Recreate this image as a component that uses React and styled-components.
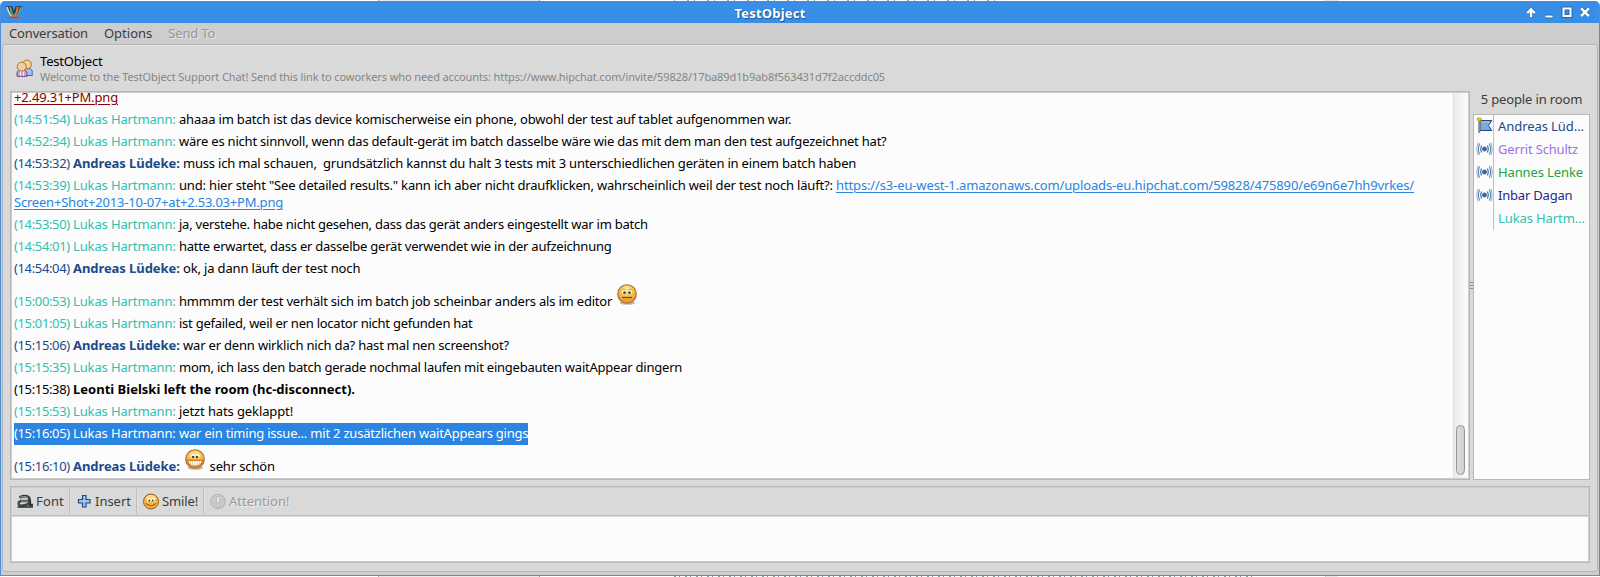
import React from "react";
import styled, { createGlobalStyle } from "styled-components";

const Global = createGlobalStyle`
  html, body { margin: 0; background: #fff; overflow: hidden; }
  * { box-sizing: border-box; }
`;

const Desktop = styled.div`
  width: 1600px;
  height: 577px;
  display: flex;
  flex-direction: column;
  font: 13px/17px "Noto Sans", "Open Sans", sans-serif;
  color: #3c3c3c;
  overflow: hidden;
`;

const DesktopEdge = styled.div`
  height: 1px;
  flex: none;
  background: ${(p) =>
    p.$busy
      ? "linear-gradient(90deg,#fff 378px,#aaa 378px,#aaa 379px,#e6eaea 379px,#e6eaea 539px,#999 539px,#999 540px,transparent 540px,transparent 1325px,#aaa 1325px,#e8e8e8 1326px,#e8e8e8 1338px,#fff 1338px), linear-gradient(90deg,#fff 672px,transparent 672px,transparent 1257px,#fff 1257px), repeating-linear-gradient(90deg,#fff 0 3px,#7fa8a0 3px 5px,#fff 5px 8px,#7a96b8 8px 9px,#fff 9px 11px)"
      : "linear-gradient(90deg,#fff 378px,#aaa 378px,#aaa 379px,#e6eaea 379px,#e6eaea 539px,#999 539px,#999 540px,transparent 540px,transparent 1325px,#aaa 1325px,#e8e8e8 1326px,#e8e8e8 1338px,#fff 1338px), linear-gradient(90deg,#fff 672px,transparent 672px,transparent 1000px,#fff 1000px), repeating-linear-gradient(90deg,#fff 0 7px,#8fb0a0 7px 9px,#fff 9px 14px,#a0b0c0 14px 15px,#fff 15px 20px)"};
`;

const Window = styled.div`
  height: 575px;
  display: flex;
  flex-direction: column;
  background: #cdcdcd;
  border: 1px solid #4a90d9;
  border-top: 0;
  border-radius: 5px 5px 0 0;
  overflow: hidden;
`;

const TitleBar = styled.header`
  height: 22px;
  margin: 0 -1px;
  flex: none;
  display: grid;
  grid-template-columns: 80px 1fr 140px;
  align-items: center;
  background: #398ee7;
`;

const TitleIcon = styled.svg`
  width: 18px;
  height: 16px;
  margin-left: 5px;
`;

const Title = styled.h1`
  margin: 0;
  text-align: center;
  font-size: 13px;
  line-height: 17px;
  letter-spacing: 0.2px;
  color: #fff;
  text-shadow: 1px 1px 1px #1f5c9f, 0 0 1px #1f5c9f;
  padding: 3px 0 0 0;
`;

const WindowButtons = styled.svg`
  width: 72px;
  height: 20px;
  justify-self: end;
  margin-right: 5px;
`;

const MenuBar = styled.nav`
  height: 21px;
  flex: none;
  display: flex;
  gap: 16px;
  padding: 2px 0 0 8px;
`;

const MenuItem = styled.span`
  letter-spacing: ${(p) => p.$track || 0}px;
  color: ${(p) => (p.$disabled ? "#969696" : "#3c3c3c")};
  text-shadow: ${(p) => (p.$disabled ? "1px 1px 0 #e6e6e6" : "none")};
`;

const Content = styled.main`
  height: 528px;
  margin: 0 1px;
  display: flex;
  flex-direction: column;
  background: #d9d9d9;
  border: 1px solid #b5b5b5;
  border-radius: 3px;
  box-shadow: inset 0 1px 0 #e4e4e4;
  padding: 0 7px;
`;

const RoomHeader = styled.div`
  height: 46px;
  flex: none;
  display: flex;
  padding: 8px 0 0 6px;
  gap: 7px;
`;

const RoomIcon = styled.svg`
  width: 17px;
  height: 18px;
  margin-top: 6px;
`;

const RoomText = styled.div`
  display: flex;
  flex-direction: column;
`;

const RoomName = styled.div`
  color: #000;
  line-height: 16px;
  letter-spacing: -0.18px;
`;

const RoomTopic = styled.div`
  font-size: 11px;
  line-height: 15px;
  letter-spacing: -0.1px;
  color: #868686;
`;

const Panes = styled.div`
  height: 389px;
  flex: none;
  display: flex;
`;

const LogFrame = styled.section`
  width: 1460px;
  display: flex;
  border: 1px solid #b8b8b8;
  box-shadow: inset 0 0 0 1px #cccccc;
  padding: 1px;
  background: #fcfcfc;
`;

const Log = styled.div`
  flex: 1;
  min-width: 0;
  height: 385px;
  overflow: hidden;
  display: flex;
  flex-direction: column;
  align-items: flex-start;
  justify-content: flex-end;
  padding: 0 0 0 2px;
`;

const Row = styled.div`
  flex: none;
  padding: ${(p) => (p.$tall ? "13px" : "2px")} 0 3px 0;
  white-space: pre;
  color: ${(p) => (p.$selected ? "#fff" : "#000")};
  background: ${(p) => (p.$selected ? "#2b84e0" : "transparent")};
`;

const Stamp = styled.span`
  display: inline-block;
  width: 59px;
  letter-spacing: -0.36px;
  color: ${(p) => p.$color};
`;

const Sender = styled.span`
  display: inline-block;
  width: ${(p) => (p.$own ? "110px" : "106px")};
  font-weight: ${(p) => (p.$own ? 700 : 400)};
  letter-spacing: ${(p) => (p.$own ? -0.07 : -0.13)}px;
  color: ${(p) => p.$color};
`;

const Words = styled.span`
  letter-spacing: ${(p) => p.$track}px;
  font-weight: ${(p) => (p.$bold ? 700 : 400)};
`;

const Link = styled.a`
  letter-spacing: ${(p) => p.$track}px;
  color: ${(p) => (p.$visited ? "#8b0000" : "#2b84e0")};
  text-decoration: underline;
  text-decoration-thickness: 1px;
  text-underline-offset: 2px;
`;

const EmojiSvg = styled.svg`
  width: 20px;
  height: 21px;
  vertical-align: 1px;
  margin: -14px 1px 0 ${(p) => p.$left}px;
`;

const ScrollTrack = styled.div`
  width: 15px;
  border-left: 1px solid #dedede;
  background: linear-gradient(90deg, #ebebeb, #fbfbfb 90%);
  display: flex;
  flex-direction: column;
  justify-content: flex-end;
  padding: 0 3px 3px 2px;
`;

const ScrollThumb = styled.div`
  height: 50px;
  width: 9px;
  border: 1px solid #969696;
  border-radius: 4.5px;
  background: linear-gradient(90deg, #dedede, #cfcfcf);
`;

const Sash = styled.div`
  width: 3px;
  display: flex;
  flex-direction: column;
  align-items: stretch;
  gap: 2px;
  padding-top: 191px;
`;

const Grip = styled.i`
  height: 1px;
  background: #8c8c8c;
`;

const People = styled.aside`
  width: 117px;
  display: flex;
  flex-direction: column;
`;

const PeopleCount = styled.div`
  height: 23px;
  text-align: center;
  letter-spacing: -0.14px;
`;

const PeopleList = styled.div`
  height: 366px;
  border: 1px solid #b8b8b8;
  background: #fcfcfc;
`;

const Person = styled.div`
  height: 23px;
  display: flex;
`;

const PersonIcon = styled.div`
  width: 20px;
  flex: none;
  border-right: 1px solid #c0c0c0;
  padding: 2px 0 0 1px;
  svg { display: block; width: 18px; height: 17px; }
`;

const PersonName = styled.span`
  padding: 3px 0 0 4px;
  white-space: nowrap;
  letter-spacing: ${(p) => p.$track}px;
  color: ${(p) => p.$color};
`;

const Composer = styled.section`
  margin-top: 6px;
  height: 77px;
  width: 1580px;
  border: 1px solid #b8b8b8;
  box-shadow: inset 0 0 0 1px #cccccc;
  padding: 1px;
  display: flex;
  flex-direction: column;
`;

const Toolbar = styled.div`
  height: 28px;
  display: flex;
  border-bottom: 1px solid #bdbdbd;
  box-shadow: 0 1px 0 #dcdcdc;
`;

const Tool = styled.button`
  width: ${(p) => p.$width}px;
  height: 26px;
  display: flex;
  align-items: flex-start;
  gap: ${(p) => p.$gap}px;
  border: 0;
  border-right: ${(p) => (p.$disabled ? "0" : "1px solid #c0c0c0")};
  box-shadow: ${(p) => (p.$disabled ? "none" : "1px 0 0 #e0e0e0")};
  background: none;
  font: inherit;
  padding: 5px 0 0 ${(p) => p.$inset}px;
  letter-spacing: ${(p) => p.$track}px;
  color: ${(p) => (p.$disabled ? "#9a9a9a" : "#3c3c3c")};
  text-shadow: ${(p) => (p.$disabled ? "1px 1px 0 #eeeeee" : "none")};
  svg { flex: none; width: 16px; height: 17px; }
`;

const Draft = styled.div`
  flex: 1;
  background: #fcfcfc;
  margin-top: 1px;
`;

const TEAL = "#2fc1af";
const NAVY = "#204a87";

function Emoji({ grin, left }) {
  return (
    <EmojiSvg viewBox="0 0 20 21" $left={left}>
      <defs>
        <radialGradient id="face" cx=".5" cy=".25" r=".8">
          <stop offset="0" stopColor="#fff08a" />
          <stop offset=".4" stopColor="#fac552" />
          <stop offset="1" stopColor="#dd8a22" />
        </radialGradient>
      </defs>
      <ellipse cx="10.5" cy="18.8" rx="8" ry="2" fill="#000" opacity=".25" />
      <circle cx="10" cy="10" r="9.3" fill="url(#face)" stroke="#a8683a" strokeWidth="1.1" />
      {grin ? (
        <g>
          <ellipse cx="7.4" cy="7" rx="2.1" ry="2.1" fill="#fff" />
          <ellipse cx="12.6" cy="7" rx="2.1" ry="2.1" fill="#fff" />
          <circle cx="8" cy="8" r="1.3" fill="#43464f" />
          <circle cx="12" cy="8" r="1.3" fill="#43464f" />
          <path d="M2.5 11.3H17.5Q16.5 17.2 10 17.2T2.5 11.3Z" fill="#fff" stroke="#e07c18" strokeWidth="1.4" />
          <path d="M5.5 12v3.5M7.7 12v4.5M10 12v4.7M12.3 12v4.5M14.5 12v3.5" stroke="#c9c2b8" strokeWidth=".8" />
        </g>
      ) : (
        <g>
          <ellipse cx="7.1" cy="8" rx="2.1" ry="2.3" fill="#fff" />
          <ellipse cx="12.9" cy="8" rx="2.1" ry="2.3" fill="#fff" />
          <path d="M4.5 6.2Q6.5 4.6 8.8 6M11.2 6Q13.5 4.6 15.5 6.2" fill="none" stroke="#e0882c" strokeWidth=".9" />
          <circle cx="7.5" cy="8.7" r="1.4" fill="#3f4a5c" />
          <circle cx="12.5" cy="8.7" r="1.4" fill="#3f4a5c" />
          <path d="M5 13.5h10" stroke="#7a4c14" strokeWidth="1.3" />
        </g>
      )}
    </EmojiSvg>
  );
}

const lukas = (time, text, track, extra = {}) => ({ time, name: "Lukas Hartmann:", color: TEAL, text, track, ...extra });
const andreas = (time, text, track, extra = {}) => ({ time, name: "Andreas Lüdeke:", color: NAVY, own: true, text, track, ...extra });

const messages = [
  lukas("14:51:54", "ahaaa im batch ist das device komischerweise ein phone, obwohl der test auf tablet aufgenommen war.", -0.183),
  lukas("14:52:34", "wäre es nicht sinnvoll, wenn das default-gerät im batch dasselbe wäre wie das mit dem man den test aufgezeichnet hat?", -0.213),
  andreas("14:53:32", "muss ich mal schauen,  grundsätzlich kannst du halt 3 tests mit 3 unterschiedlichen geräten in einem batch haben", -0.2),
  lukas("14:53:39", 'und: hier steht "See detailed results." kann ich aber nicht draufklicken, wahrscheinlich weil der test noch läuft?: ', -0.175, {
    link: ["https://s3-eu-west-1.amazonaws.com/uploads-eu.hipchat.com/59828/475890/e69n6e7hh9vrkes/", "Screen+Shot+2013-10-07+at+2.53.03+PM.png"],
  }),
  lukas("14:53:50", "ja, verstehe. habe nicht gesehen, dass das gerät anders eingestellt war im batch", -0.242),
  lukas("14:54:01", "hatte erwartet, dass er dasselbe gerät verwendet wie in der aufzeichnung", -0.23),
  andreas("14:54:04", "ok, ja dann läuft der test noch", -0.16),
  lukas("15:00:53", "hmmmm der test verhält sich im batch job scheinbar anders als im editor ", -0.202, { emoji: "end" }),
  lukas("15:01:05", "ist gefailed, weil er nen locator nicht gefunden hat", -0.25),
  andreas("15:15:06", "war er denn wirklich nich da? hast mal nen screenshot?", -0.186),
  lukas("15:15:35", "mom, ich lass den batch gerade nochmal laufen mit eingebauten waitAppear dingern", -0.228),
  { time: "15:15:38", color: "#000", text: "Leonti Bielski left the room (hc-disconnect).", track: 0.01, bold: true },
  lukas("15:15:53", "jetzt hats geklappt!", -0.11),
  lukas("15:16:05", "war ein timing issue... mit 2 zusätzlichen waitAppears gings", -0.21, { selected: true }),
  andreas("15:16:10", " sehr schön", -0.13, { emoji: "start" }),
];

function Message({ m }) {
  const color = m.selected ? "#fff" : m.color;
  return (
    <Row $tall={!!m.emoji} $selected={m.selected}>
      <Stamp $color={color}>({m.time})</Stamp>
      {m.name && <Sender $own={m.own} $color={color}>{m.name}</Sender>}
      {m.emoji === "start" && <Emoji grin left={2.3} />}
      <Words $track={m.track} $bold={m.bold}>{m.text}</Words>
      {m.emoji === "end" && <Emoji left={2} />}
      {m.link && (
        <>
          <Link $track={-0.133}>{m.link[0]}</Link>
          <br />
          <Link $track={-0.206}>{m.link[1]}</Link>
        </>
      )}
    </Row>
  );
}

const Flag = () => (
  <svg viewBox="0 0 18 17">
    <path d="M5 3.500H16.800L13.500 8.500 16.800 13.500H5Z" fill="#7ea9d8" stroke="#204a87" />
    <path d="M6 5H14.500" stroke="#a9c8ea" />
    <path d="M4.200 4v12" stroke="#888a85" strokeWidth="2" />
    <rect x="2" y="1" width="4.500" height="2.400" rx="1" fill="#edd400" stroke="#b79a00" strokeWidth=".7" />
  </svg>
);

const Broadcast = () => (
  <svg viewBox="0 0 18 17" fill="none" stroke="#3f6ca6">
    <circle cx="9.500" cy="9" r="2.100" fill="#3465a4" stroke="#204a87" strokeWidth=".6" />
    <path d="M6.500 5.500Q4.800 9 6.500 12.500M12.500 5.500Q14.200 9 12.500 12.500" strokeWidth="1.200" />
    <path d="M4.700 3.500Q2 9 4.700 14.500M14.300 3.500Q17 9 14.300 14.500" strokeWidth="1.100" opacity=".85" />
    <path d="M3 2.500Q.3 9 3 15.500M16 2.500Q18.700 9 16 15.500" opacity=".5" />
  </svg>
);

const people = [
  { name: "Andreas Lüd...", color: NAVY, track: -0.07, icon: <Flag /> },
  { name: "Gerrit Schultz", color: "#a070e8", track: -0.18, icon: <Broadcast /> },
  { name: "Hannes Lenke", color: "#22a340", track: -0.12, icon: <Broadcast /> },
  { name: "Inbar Dagan", color: "#28288a", track: -0.2, icon: <Broadcast /> },
  { name: "Lukas Hartm...", color: TEAL, track: -0.1, icon: null },
];

export default function App() {
  return (
    <Desktop>
      <Global />
      <DesktopEdge />
      <Window>
        <TitleBar>
          <TitleIcon viewBox="0 0 18 16" fill="none">
            <path d="M.8 2H7.500L11 14H6.500Z" fill="#23405c" />
            <path d="M17.200 2H10.500L7 14h4.500Z" fill="#23405c" />
            <path d="M2.200 2.800Q3 8 7.500 13.500" stroke="#e9d9a8" strokeWidth="1.500" />
            <path d="M5.200 2.800Q5.500 8 9 13" stroke="#3fae6a" strokeWidth="2" />
            <path d="M15.800 2.800Q15 8 10.500 13.500" stroke="#4bb36c" strokeWidth="1.500" />
            <path d="M12.800 2.800Q12.500 8 9 13" stroke="#f0703c" strokeWidth="2" />
            <path d="M4 14.500L7.500 12.500M14 14.500L10.500 12.500" stroke="#c85028" strokeWidth="1.500" />
          </TitleIcon>
          <Title>TestObject</Title>
          <WindowButtons viewBox="0 0 72 20" fill="none">
            <g stroke="#1f5a9c" strokeWidth="4" opacity=".75">
              <path d="M8 15V7M4.800 10.500L8 7.300 11.200 10.500" />
              <path d="M22.500 14.500h7" />
              <path d="M40.500 6.500h7v7.500h-7Z" />
              <path d="M58.500 6.500l7 7M65.500 6.500l-7 7" />
            </g>
            <g stroke="#fff" strokeWidth="2">
              <path d="M8 15V7M4.300 11L8 7.200 11.700 11" strokeWidth="2.400" />
              <path d="M22.500 14.500h7" />
              <path d="M40.500 6.500h7v7.500h-7Z" />
              <path d="M58.200 6.400l7.600 7.600M65.800 6.400l-7.600 7.600" strokeWidth="2.500" />
            </g>
          </WindowButtons>
        </TitleBar>
        <MenuBar>
          <MenuItem $track={-0.16}>Conversation</MenuItem>
          <MenuItem>Options</MenuItem>
          <MenuItem $track={-0.15} $disabled>Send To</MenuItem>
        </MenuBar>
        <Content>
          <RoomHeader>
            <RoomIcon viewBox="0 0 17 18">
              <path d="M6 17V12Q6 9.500 11 9.500T16.200 12V16.500H7Z" fill="#a9c4ee" stroke="#3a62b0" />
              <circle cx="11" cy="5.500" r="4.400" fill="#f0cf98" stroke="#b3701c" />
              <path d="M1 17.300V14Q1 11 6 11T11 14V17.300Z" fill="#c9a6cf" stroke="#6d4080" />
              <circle cx="5.700" cy="7.700" r="4.500" fill="#f3cfa0" stroke="#b3701c" />
              <path d="M4.500 12.500v4.500M7.500 12.500v4.500" stroke="#f2e6f5" />
            </RoomIcon>
            <RoomText>
              <RoomName>TestObject</RoomName>
              <RoomTopic>
                Welcome to the TestObject Support Chat! Send this link to coworkers who need accounts: https://www.hipchat.com/invite/59828/17ba89d1b9ab8f563431d7f2accddc05
              </RoomTopic>
            </RoomText>
          </RoomHeader>
          <Panes>
            <LogFrame>
              <Log>
                <Row><Link $track={-0.145} $visited>+2.49.31+PM.png</Link></Row>
                {messages.map((m) => <Message key={m.time} m={m} />)}
              </Log>
              <ScrollTrack><ScrollThumb /></ScrollTrack>
            </LogFrame>
            <Sash><Grip /><Grip /><Grip /></Sash>
            <People>
              <PeopleCount>5 people in room</PeopleCount>
              <PeopleList>
                {people.map((p) => (
                  <Person key={p.name}>
                    <PersonIcon>{p.icon}</PersonIcon>
                    <PersonName $color={p.color} $track={p.track}>{p.name}</PersonName>
                  </Person>
                ))}
              </PeopleList>
            </People>
          </Panes>
          <Composer>
            <Toolbar>
              <Tool $width={58} $inset={5} $gap={3} $track={0.15}>
                <svg viewBox="0 0 16 17" fill="none">
                  <path d="M2.500 4.500Q7 2.500 10.500 3.500Q12.500 4.500 12.700 7L13 12H16" stroke="#2e3436" strokeWidth="2.600" />
                  <path d="M12 8H4.200Q1.800 8.400 1.600 10.400T4 12.600Q9.500 12.600 12.500 10.200" stroke="#3f4444" strokeWidth="2.400" />
                  <path d="M3 4.200Q9 2.400 11.300 4.600M4 8H11" stroke="#a0a4a0" strokeWidth=".9" />
                  <path d="M.5 14H16" stroke="#222" strokeWidth="1.400" />
                </svg>
                Font
              </Tool>
              <Tool $width={67} $inset={6} $gap={3} $track={-0.03}>
                <svg viewBox="0 0 16 17">
                  <path d="M6.500 2.500h3.500v4h4v3.500h-4v4H6.500v-4H2.500v-3.500h4Z" fill="#9cc4f0" stroke="#204a87" strokeWidth="1.200" />
                </svg>
                Insert
              </Tool>
              <Tool $width={67} $inset={6} $gap={3} $track={-0.1}>
                <svg viewBox="0 0 16 17">
                  <circle cx="8" cy="8.500" r="7.500" fill="#f5b544" stroke="#8f5a1c" />
                  <ellipse cx="8" cy="5" rx="5" ry="3" fill="#fde17a" />
                  <ellipse cx="5.800" cy="7" rx="1.700" ry="1.900" fill="#fff" />
                  <ellipse cx="10.200" cy="7" rx="1.700" ry="1.900" fill="#fff" />
                  <circle cx="6.200" cy="7.500" r=".9" fill="#333" />
                  <circle cx="9.800" cy="7.500" r=".9" fill="#333" />
                  <path d="M3 10.500Q8 15 13 10.500" fill="none" stroke="#a8600c" strokeWidth="1.100" />
                </svg>
                Smile!
              </Tool>
              <Tool $width={100} $inset={6} $gap={3} $disabled>
                <svg viewBox="0 0 16 17">
                  <circle cx="8" cy="8.500" r="7.300" fill="#cacaca" stroke="#b2b2b2" />
                  <path d="M6.600 3.500h2.800v6.200H6.600ZM6.600 11.200h2.800v2.400H6.600Z" fill="#ececec" stroke="#aaa" strokeWidth=".6" />
                </svg>
                Attention!
              </Tool>
            </Toolbar>
            <Draft />
          </Composer>
        </Content>
      </Window>
      <DesktopEdge $busy />
    </Desktop>
  );
}
